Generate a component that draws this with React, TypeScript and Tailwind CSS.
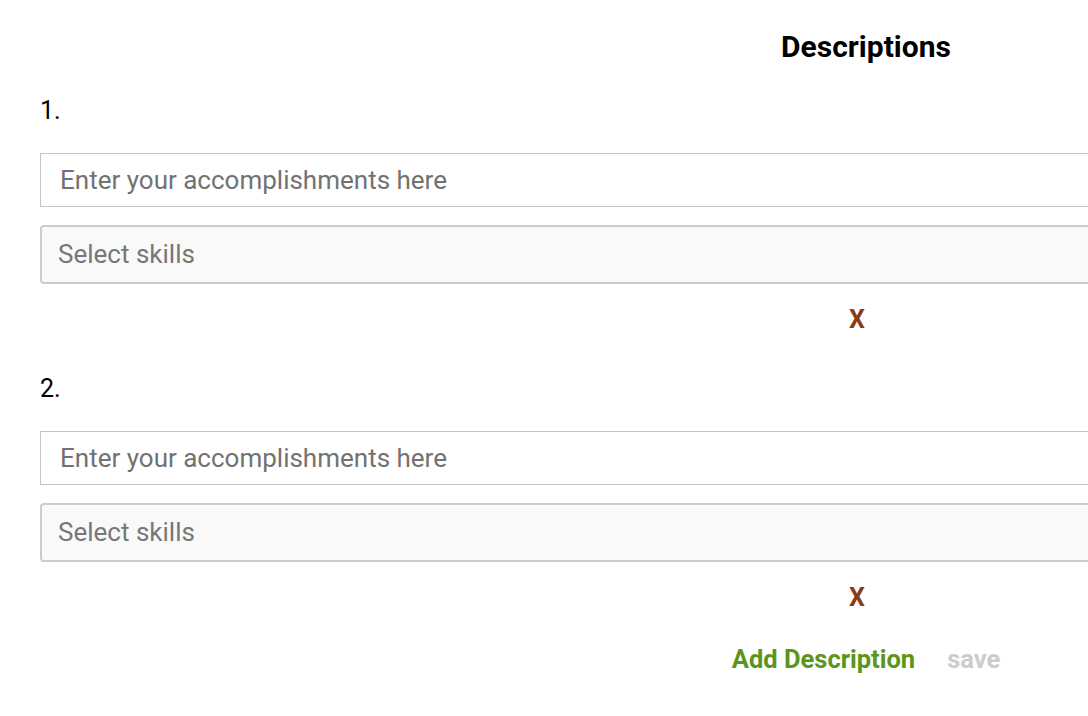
export default function App() {
  const items = [1, 2];
  return (
    <div className="w-[1732px] bg-white px-[40px] pt-[28px] font-['Roboto',sans-serif] text-black">
      <h2 className="text-center text-[30px] font-bold leading-[38px]">Descriptions</h2>
      {items.map((n, i) => (
        <div key={n} className={i === 0 ? "mt-[30px]" : "mt-[40px]"}>
          <div className="text-[25px] leading-[30px]">{n}.</div>
          <input
            className="mt-[27px] block h-[54px] w-full border border-[#c4c4c4] bg-white px-[19px] text-[26px] text-[#727272] placeholder:text-[#727272] outline-none"
            placeholder="Enter your accomplishments here"
          />
          <div className="mt-[18px] flex h-[59px] items-center rounded-[4px] border-2 border-[#cccccc] bg-[#f9f9f9] px-[16px] text-[26px] text-[#777777]">
            Select skills
          </div>
          <div className="mt-[22px] flex justify-center">
            <button className="mr-[18px] text-[25px] font-bold leading-[28px] text-[#8b3a14]">X</button>
          </div>
        </div>
      ))}
      <div className="mt-[28px] flex justify-center gap-[32px] text-[25.5px] font-bold">
        <button className="text-[#5b951c]">Add Description</button>
        <button className="text-[#cccccc]">save</button>
      </div>
    </div>
  );
}
